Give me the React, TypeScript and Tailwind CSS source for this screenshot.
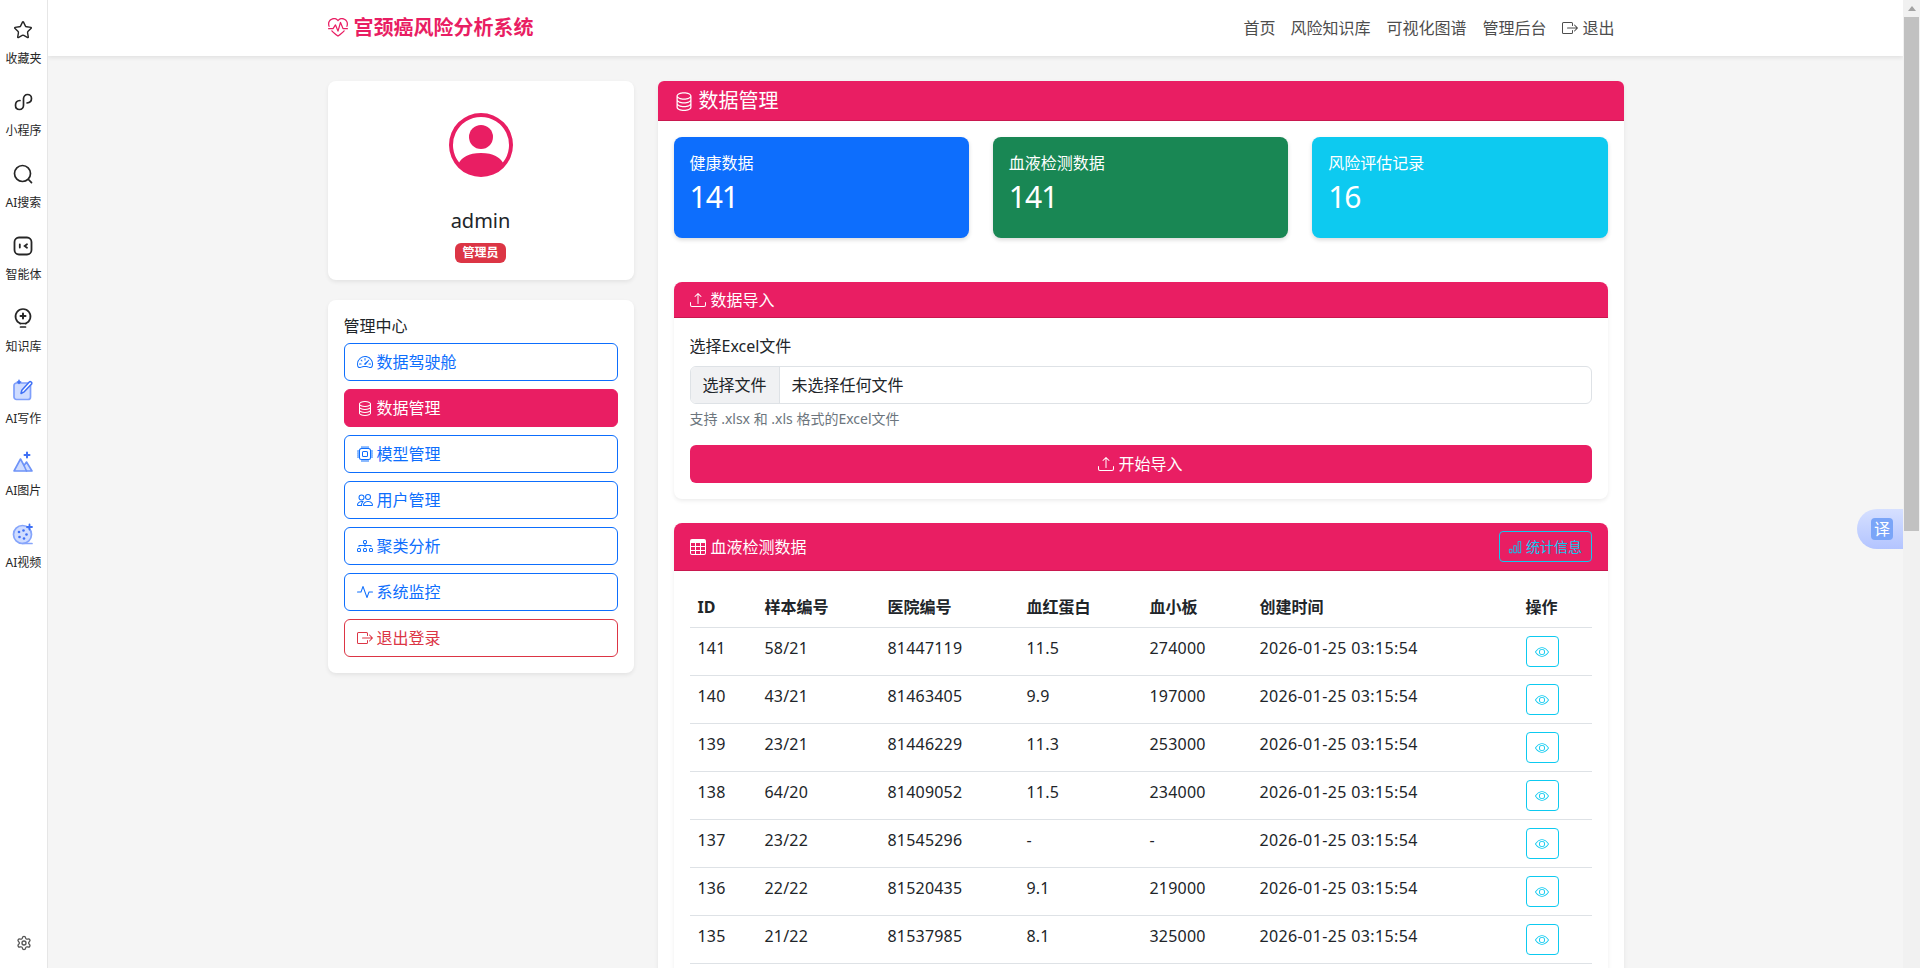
import type { ReactNode } from "react"
import {
  BsActivity,
  BsBarChart,
  BsBoxArrowRight,
  BsCpu,
  BsDatabase,
  BsDiagram3,
  BsEye,
  BsHeartPulse,
  BsPeople,
  BsPersonCircle,
  BsSpeedometer2,
  BsTable,
  BsUpload,
} from "react-icons/bs"
import { Settings, Star } from "lucide-react"

const railTop: { label: string; icon: ReactNode }[] = [
  { label: "收藏夹", icon: <Star className="w-[20px] h-[20px]" strokeWidth={1.7} /> },
  {
    label: "小程序",
    icon: (
      <svg viewBox="0 0 24 24" className="w-6 h-6" fill="none" stroke="#262626" strokeWidth="1.7" strokeLinecap="round">
        <path d="M9 10.500c-2.500.2-4.500 1.800-4.500 4.700 0 2.600 1.800 4.300 4 4.300 2.500 0 4-2 4-4.300V8.800c0-2.500 1.800-4.300 4-4.300 2.300 0 4 1.800 4 4 0 2.700-2 4.300-4.500 4.500" />
      </svg>
    ),
  },
  {
    label: "AI搜索",
    icon: (
      <svg viewBox="0 0 24 24" className="w-6 h-6" fill="none" stroke="#262626" strokeWidth="1.7" strokeLinecap="round">
        <circle cx="11.500" cy="11.500" r="8" />
        <path d="M17.500 17.500l3 3.200" />
      </svg>
    ),
  },
  {
    label: "智能体",
    icon: (
      <svg viewBox="0 0 24 24" className="w-6 h-6" fill="none" stroke="#262626" strokeWidth="1.800" strokeLinecap="round">
        <rect x="3.500" y="3.500" width="17" height="17" rx="4.500" />
        <path d="M8.800 10.500v3M16 10.300l-2.300 1.700 2.300 1.700" />
      </svg>
    ),
  },
  {
    label: "知识库",
    icon: (
      <svg viewBox="0 0 24 24" className="w-6 h-6" fill="none" stroke="#262626" strokeWidth="1.700" strokeLinecap="round">
        <path d="M9.300 17.500a7.500 7.500 0 1 1 5.400 0" />
        <path d="M12 7.500v5M9.500 10h5" strokeWidth="2" />
        <path d="M9 17.500h6M9.500 21h5" />
      </svg>
    ),
  },
  {
    label: "AI写作",
    icon: (
      <svg viewBox="0 0 24 24" className="w-6 h-6" fill="none" strokeLinecap="round" strokeLinejoin="round">
        <rect x="3" y="5" width="16.500" height="16.500" rx="2.500" fill="#cfdcff" stroke="#7f9ffb" strokeWidth="1.700" />
        <path d="M10 15.500l.8-3.300 7.500-8.200c.8-.8 3-.2 2.500 1.800l-7.600 8z" fill="#fff" stroke="#3f70f5" strokeWidth="1.500" />
        <path d="M8 2.200v3.400M6.300 3.900h3.400" stroke="#3f70f5" strokeWidth="1.500" />
      </svg>
    ),
  },
  {
    label: "AI图片",
    icon: (
      <svg viewBox="0 0 24 24" className="w-6 h-6" fill="none" strokeLinecap="round" strokeLinejoin="round">
        <path d="M3 21L9.500 9l3.500 6.500 2.500-3.500L21 21z" fill="#cfdcff" stroke="#6e93f8" strokeWidth="1.600" />
        <path d="M13 15.500L15.500 21" stroke="#6e93f8" strokeWidth="1.600" />
        <path d="M16 2.500v5M13.500 5h5" stroke="#3f70f5" strokeWidth="2" />
      </svg>
    ),
  },
  {
    label: "AI视频",
    icon: (
      <svg viewBox="0 0 24 24" className="w-6 h-6" fill="none" strokeLinecap="round">
        <circle cx="11.500" cy="12.500" r="9" fill="#cfdcff" stroke="#86a5fb" strokeWidth="1.700" />
        <path d="M11.500 21.500H21" stroke="#86a5fb" strokeWidth="1.700" />
        <circle cx="8" cy="10" r="1.300" fill="#3f70f5" />
        <circle cx="12.500" cy="8.500" r="1.300" fill="#3f70f5" />
        <circle cx="8.500" cy="15" r="1.300" fill="#3f70f5" />
        <circle cx="13" cy="16.500" r="1.300" fill="#3f70f5" />
        <circle cx="15.500" cy="12.500" r="1.300" fill="#3f70f5" />
        <path d="M18.500 2.500v5M16 5h5" stroke="#3f70f5" strokeWidth="1.800" />
      </svg>
    ),
  },
]

const menu = [
  { label: "数据驾驶舱", icon: <BsSpeedometer2 /> },
  { label: "数据管理", icon: <BsDatabase />, active: true },
  { label: "模型管理", icon: <BsCpu /> },
  { label: "用户管理", icon: <BsPeople /> },
  { label: "聚类分析", icon: <BsDiagram3 /> },
  { label: "系统监控", icon: <BsActivity /> },
]

const stats = [
  { label: "健康数据", value: "141", color: "bg-[#0d6efd]" },
  { label: "血液检测数据", value: "141", color: "bg-[#198754]" },
  { label: "风险评估记录", value: "16", color: "bg-[#0dcaf0]" },
]

const rows = [
  ["141", "58/21", "81447119", "11.5", "274000"],
  ["140", "43/21", "81463405", "9.9", "197000"],
  ["139", "23/21", "81446229", "11.3", "253000"],
  ["138", "64/20", "81409052", "11.5", "234000"],
  ["137", "23/22", "81545296", "-", "-"],
  ["136", "22/22", "81520435", "9.1", "219000"],
  ["135", "21/22", "81537985", "8.1", "325000"],
]

function Rail() {
  return (
    <aside className="w-[48px] shrink-0 bg-white border-r border-[#e6e6e6] flex flex-col items-center pt-[18px] pb-[17px] text-[#262626]">
      <div className="flex flex-col items-center gap-[23px]">
        {railTop.map((item) => (
          <div key={item.label} className="flex flex-col items-center gap-[9px]">
            <div className="h-6 flex items-center justify-center">{item.icon}</div>
            <span className="text-[12px] leading-[16px] whitespace-nowrap">{item.label}</span>
          </div>
        ))}
      </div>
      <Settings className="w-4 h-4 mt-auto text-[#555]" strokeWidth={2} />
    </aside>
  )
}

function Navbar() {
  return (
    <nav className="h-[56px] shrink-0 bg-white shadow-[0_2px_4px_rgba(0,0,0,0.08)] relative">
      <div className="w-[1320px] mx-auto px-[12px] h-full flex items-center justify-between">
        <div className="flex items-center gap-[6px] text-[#e91e63] font-bold text-[20px]">
          <BsHeartPulse className="w-[20px] h-[20px]" />
          <span>宫颈癌风险分析系统</span>
        </div>
        <div className="flex items-center text-[16px] text-[#4d4d4d]">
          <a className="pl-[8px] pr-[7px]">首页</a>
          <a className="px-[8px]">风险知识库</a>
          <a className="px-[8px]">可视化图谱</a>
          <a className="px-[8px]">管理后台</a>
          <a className="pl-[8px] pr-[9px] flex items-center gap-[4px]">
            <BsBoxArrowRight className="w-4 h-4" />
            退出
          </a>
        </div>
      </div>
    </nav>
  )
}

function Sidebar() {
  return (
    <div className="w-[306px] shrink-0 flex flex-col gap-[20px]">
      <div className="bg-white rounded-[8px] shadow-[0_2px_4px_rgba(0,0,0,0.075)] h-[199px] flex flex-col items-center pt-[32px]">
        <BsPersonCircle className="w-[64px] h-[64px] text-[#e91e63]" />
        <h5 className="mt-[32px] text-[20px] leading-[24px] text-[#212529]">admin</h5>
        <span className="mt-[10px] bg-[#dc3545] text-white text-[12px] leading-[12px] font-bold px-[7px] py-[4px] rounded-[6px]">管理员</span>
      </div>
      <div className="bg-white rounded-[8px] shadow-[0_2px_4px_rgba(0,0,0,0.075)] p-[16px]">
        <h6 className="text-[16px] leading-[19px] text-[#212529] mt-[1px] mb-[7px]">管理中心</h6>
        <div className="flex flex-col gap-[8px]">
          {menu.map((m) =>
            m.active ? (
              <button key={m.label} className="h-[38px] rounded-[6px] border border-[#e91e63] bg-[#e91e63] text-white flex items-center gap-[4px] px-[12px] text-[16px]">
                {m.icon}
                {m.label}
              </button>
            ) : (
              <button key={m.label} className="h-[38px] rounded-[6px] border border-[#0d6efd] text-[#0d6efd] flex items-center gap-[4px] px-[12px] text-[16px]">
                {m.icon}
                {m.label}
              </button>
            ),
          )}
          <button className="h-[38px] rounded-[6px] border border-[#dc3545] text-[#dc3545] flex items-center gap-[4px] px-[12px] text-[16px]">
            <BsBoxArrowRight />
            退出登录
          </button>
        </div>
      </div>
    </div>
  )
}

function ImportCard() {
  return (
    <div className="mt-[44px] bg-white rounded-[8px] shadow-[0_2px_4px_rgba(0,0,0,0.075)]">
      <div className="h-[36px] bg-[#e91e63] rounded-t-[8px] border-b border-[#c9184f] text-white flex items-center gap-[5px] px-[16px] text-[16px]">
        <BsUpload className="w-4 h-4" />
        数据导入
      </div>
      <div className="p-[16px]">
        <label className="block text-[16px] leading-[24px] text-[#212529] mb-[8px]">选择Excel文件</label>
        <div className="h-[38px] flex border border-[#dee2e6] rounded-[6px] overflow-hidden text-[16px] text-[#212529]">
          <span className="w-[89px] bg-[#f0f1f3] border-r border-[#dee2e6] flex items-center justify-center">选择文件</span>
          <span className="flex items-center px-[12px]">未选择任何文件</span>
        </div>
        <p className="mt-[4px] text-[14px] leading-[21px] text-[#6c757d]">支持 .xlsx 和 .xls 格式的Excel文件</p>
        <button className="mt-[16px] w-full h-[38px] rounded-[6px] bg-[#e91e63] text-white flex items-center justify-center gap-[4px] text-[16px]">
          <BsUpload className="w-4 h-4" />
          开始导入
        </button>
      </div>
    </div>
  )
}

function BloodTable() {
  return (
    <div className="mt-[24px] bg-white rounded-[8px] shadow-[0_2px_4px_rgba(0,0,0,0.075)]">
      <div className="h-[48px] bg-[#e91e63] rounded-t-[8px] border-b border-[#c9184f] text-white flex items-center justify-between px-[16px] text-[16px]">
        <span className="flex items-center gap-[5px]">
          <BsTable className="w-4 h-4" />
          血液检测数据
        </span>
        <button className="h-[31px] w-[93px] rounded-[4px] border border-[#0dcaf0] text-[#0dcaf0] text-[14px] flex items-center justify-center gap-[4px]">
          <BsBarChart className="w-[14px] h-[14px]" />
          统计信息
        </button>
      </div>
      <div className="p-[16px]">
        <table className="w-full table-fixed border-collapse text-[16px] text-[#212529]">
          <thead>
            <tr className="border-b border-[#dee2e6]">
              <th className="w-[67px] p-[8px] text-left font-bold">ID</th>
              <th className="w-[123px] p-[8px] text-left font-bold">样本编号</th>
              <th className="w-[139px] p-[8px] text-left font-bold">医院编号</th>
              <th className="w-[123px] p-[8px] text-left font-bold">血红蛋白</th>
              <th className="w-[110px] p-[8px] text-left font-bold">血小板</th>
              <th className="w-[266px] p-[8px] text-left font-bold">创建时间</th>
              <th className="p-[8px] text-left font-bold">操作</th>
            </tr>
          </thead>
          <tbody>
            {rows.map((r) => (
              <tr key={r[0]} className="border-b border-[#dee2e6] h-[48px]">
                {r.map((c, i) => (
                  <td key={i} className="px-[8px] pt-[8px] pb-[15px] align-top leading-[24px] tracking-[0.2px]">
                    {c}
                  </td>
                ))}
                <td className="px-[8px] py-[8px] align-top leading-[24px] tracking-[0.37px]">2026-01-25 03:15:54</td>
                <td className="px-[8px] py-[8px] align-top">
                  <button className="w-[33px] h-[31px] rounded-[4px] border border-[#0dcaf0] text-[#0dcaf0] flex items-center justify-center">
                    <BsEye className="w-[14px] h-[14px]" />
                  </button>
                </td>
              </tr>
            ))}
          </tbody>
        </table>
      </div>
    </div>
  )
}

function Translate() {
  return (
    <div className="absolute right-0 top-[509px] w-[46px] h-[40px] rounded-l-[20px] bg-gradient-to-b from-[#d6e0ff] to-[#b3c4ff] flex items-center pl-[14px]">
      <span className="w-[22px] h-[22px] rounded-[4px] bg-[#7aa5f8] text-white text-[16px] leading-[22px] text-center">译</span>
    </div>
  )
}

function Scrollbar() {
  return (
    <div className="w-[17px] shrink-0 bg-[#f1f1f1] flex flex-col items-center">
      <div className="h-[17px] flex items-center justify-center">
        <svg viewBox="0 0 8 5" className="w-[8px] h-[5px]">
          <path d="M4 0l4 5H0z" fill="#a3a3a3" />
        </svg>
      </div>
      <div className="w-[15px] h-[514px] bg-[#c1c1c1]" />
    </div>
  )
}

export default function App() {
  return (
    <div
      className="h-[968px] w-[1920px] flex overflow-hidden bg-[#f5f5f5]"
      style={{ fontFamily: '"Noto Sans", "Noto Sans CJK SC", sans-serif' }}
    >
      <Rail />
      <div className="flex-1 min-w-0 flex flex-col relative overflow-hidden">
        <Navbar />
        <main className="w-[1320px] mx-auto px-[12px] pt-[25px] flex gap-[24px]">
          <Sidebar />
          <section className="flex-1 min-w-0 self-start bg-white rounded-[6px] shadow-[0_2px_4px_rgba(0,0,0,0.075)]">
            <div className="h-[40px] bg-[#e91e63] rounded-t-[6px] border-b border-[#c9184f] text-white flex items-center gap-[5px] px-[16px] text-[20px]">
              <BsDatabase className="w-5 h-5" />
              数据管理
            </div>
            <div className="p-[16px]">
              <div className="grid grid-cols-3 gap-[24px]">
                {stats.map((s) => (
                  <div key={s.label} className={`${s.color} h-[101px] rounded-[8px] text-white p-[16px] shadow-[0_2px_4px_rgba(0,0,0,0.15)]`}>
                    <div className="text-[16px] leading-[19px] mt-[1px]">{s.label}</div>
                    <div className="text-[30px] leading-[34px] mt-[7px] tracking-[-1px]">{s.value}</div>
                  </div>
                ))}
              </div>
              <ImportCard />
              <BloodTable />
            </div>
          </section>
        </main>
        <Translate />
      </div>
      <Scrollbar />
    </div>
  )
}
